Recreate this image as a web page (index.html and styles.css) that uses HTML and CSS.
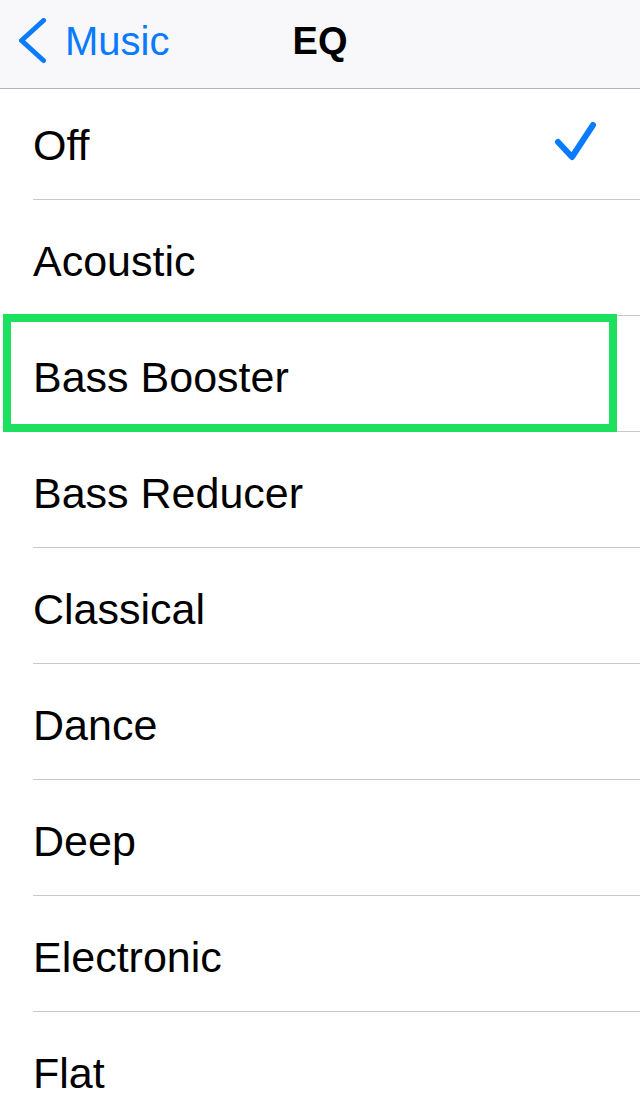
FILE: index.html
```html
<!DOCTYPE html>
<html>
<head>
  <meta charset="UTF-8">
  <title>EQ</title>
  <link rel="stylesheet" href="styles.css">
</head>
<body>
  <div class="navbar">
    <a class="back" href="#">
      <svg class="chevron" width="30" height="48" viewBox="0 0 30 48">
        <polyline points="24.5,2.5 2.5,22.5 24.5,42.5" fill="none" stroke="#0a7aff" stroke-width="5" stroke-linecap="round" stroke-linejoin="round"/>
      </svg>
      <span>Music</span>
    </a>
    <div class="title">EQ</div>
    <div></div>
  </div>

  <ul class="list">
    <li class="item first">
      <span>Off</span>
      <svg class="check" width="44" height="44" viewBox="0 0 44 44">
        <polyline points="6,20 20,35 41,3" fill="none" stroke="#0a7aff" stroke-width="6" stroke-linecap="round" stroke-linejoin="round"/>
      </svg>
    </li>
    <li class="item">Acoustic</li>
    <li class="item marked">Bass Booster<div class="highlight"></div></li>
    <li class="item">Bass Reducer</li>
    <li class="item">Classical</li>
    <li class="item">Dance</li>
    <li class="item">Deep</li>
    <li class="item">Electronic</li>
    <li class="item">Flat</li>
  </ul>
</body>
</html>
```

FILE: styles.css
```css
html, body { margin: 0; padding: 0; background: #fff; }
body { font-family: "Liberation Sans", Arial, sans-serif; color: #000; overflow: hidden; height: 1096px; }

.navbar { display: grid; grid-template-columns: 1fr auto 1fr; align-items: center; height: 82px; padding-bottom: 6px; background: #f8f8fa; border-bottom: 1px solid #b4b4b4; }
.back { display: flex; align-items: center; gap: 16px; padding-left: 19px; color: #0a7aff; text-decoration: none; font-size: 40px; line-height: 48px; }
.chevron { display: block; margin-top: 2px; }
.title { font-size: 38px; font-weight: bold; line-height: 48px; }

.list { list-style: none; margin: 0 0 0 33px; padding: 0; }
.item { display: flex; align-items: center; justify-content: space-between; font-size: 43px; line-height: 43px; padding: 40px 44px 32px 0; border-bottom: 1px solid #c8c7cc; position: relative; }
.item.first { padding-top: 35px; padding-bottom: 32px; }
.check { display: block; margin: -6px 0 -6px 0; position: relative; top: -2px; }

.highlight { position: absolute; left: -30px; right: 23px; top: -2px; bottom: -1px; border: 8px solid #1ce05e; }
```
